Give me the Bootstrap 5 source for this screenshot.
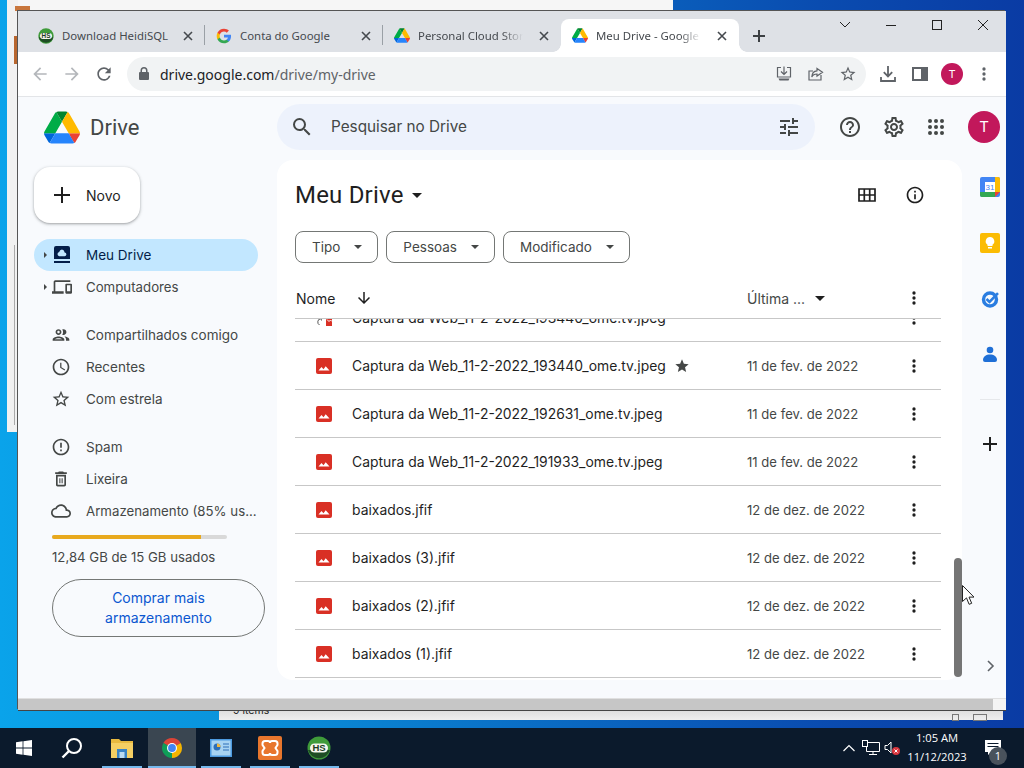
<!doctype html>
<html lang="pt-BR">

<head>
    <meta charset="UTF-8">
    <meta name="viewport" content="width=device-width, initial-scale=1.0">
    <title>Meu Drive - Google Drive</title>
    <link href="https://cdn.jsdelivr.net/npm/bootstrap@5.3.0/dist/css/bootstrap.min.css" rel="stylesheet">
    <style>
        html, body { width: 1024px; height: 768px; overflow: hidden; }
        body { font-family: "Inter", "Liberation Sans", sans-serif; font-size: 13.5px; color: #1f1f1f; background: #0b6cc8; }
        svg { fill: currentColor; flex: none; display: block; }

        /* desktop */
        .desk { position: relative; width: 1024px; height: 768px; overflow: hidden; background: linear-gradient(90deg, #0aa3ea 0, #0a94dc 22%, #0a6fc6 50%, #0a4cb0 80%, #0a3ba4 100%); }
        .back-top { position: absolute; left: 7px; top: 0; width: 666px; height: 11px; background: #f6f6f6; border-bottom: 1px solid #777; }
        .back-left { position: absolute; left: 7px; top: 0; width: 11px; height: 432px; background: #f1f1f1; }
        .back-line { position: absolute; left: 14px; top: 245px; width: 1px; height: 180px; background: #aaa; }
        .back-o1 { position: absolute; left: 15px; top: 6px; width: 15px; height: 5px; background: #c8763c; }
        .back-o2 { position: absolute; left: 14px; top: 36px; width: 4px; height: 28px; background: #b8662e; }
        .back-bot { position: absolute; left: 219px; top: 700px; width: 784px; height: 20px; background: linear-gradient(180deg, #ddd 50%, #eee); font-size: 10.5px; color: #222; padding: 3px 8px 0 14px; }
        .back-mark { width: 7px; height: 7px; margin: 11px 14px 0 0; border: 1px solid #777; }
        .back-mark.is-wide { width: 14px; margin-right: 8px; }

        /* chrome window */
        .browser { position: absolute; left: 18px; top: 11px; width: 988px; height: 699px; background: #fff; box-shadow: -1px -1px 0 #555, 0 1px 0 #444; }
        .tab-strip { height: 41px; background: #dee1e6; }
        .tab-row { padding: 8px 0 0 9px; }
        .chrome-tab { position: relative; width: 178px; height: 33px; padding: 0 9px 0 11px; font-family: "Noto Sans", sans-serif; font-size: 11.4px; color: #45494e; }
        .chrome-tab::after { content: ""; position: absolute; right: 0; top: 6px; width: 1px; height: 20px; background: #9aa0a6; }
        .chrome-tab.is-last::after { display: none; }
        .chrome-tab.is-on { background: #fff; border-radius: 8px 8px 0 0; }
        .chrome-tab.is-on::before, .chrome-tab.is-on::after { content: ""; position: absolute; bottom: 0; top: auto; width: 8px; height: 8px; }
        .chrome-tab.is-on::before { left: -8px; background: radial-gradient(circle at 0 0, transparent 7.5px, #fff 8px); }
        .chrome-tab.is-on::after { right: -8px; background: radial-gradient(circle at 100% 0, transparent 7.5px, #fff 8px); }
        .tab-title { flex: 1; min-width: 0; margin-left: 8px; white-space: nowrap; }
        .tab-fade { margin-right: 13px; -webkit-mask-image: linear-gradient(90deg, #000 80%, transparent); mask-image: linear-gradient(90deg, #000 80%, transparent); }
        .new-tab { width: 28px; height: 28px; margin-left: 6px; color: #3c4043; }
        .win-btn { width: 46px; height: 28px; color: #222; }

        .tool-bar { height: 45px; border-bottom: 1px solid #e3e5e8; padding: 0 6px; color: #5f6368; }
        .tool-btn { width: 32px; height: 32px; }
        .tool-off { color: #b4b7bb; }
        .omni { width: 739px; height: 34px; margin: 0 6px 0 7px; padding: 0 2px 0 11px; background: #f1f3f4; border-radius: 17px; font-family: "Noto Sans", sans-serif; font-size: 14px; }
        .omni-url { margin-left: 10px; color: #202124; }
        .omni-url span { color: #5f6368; }
        .face-sm { width: 22px; height: 22px; margin: 0 5px; border-radius: 50%; background: #c2185b; color: #fff; font-size: 11px; }

        /* drive */
        .drive-app { height: 601px; background: #f8fafd; }
        .drive-head { height: 63px; }
        .logo-box { width: 259px; padding-left: 26px; margin-bottom: 3px; }
        .logo-word { margin-left: 10px; font-family: "Roboto", sans-serif; font-size: 22px; color: #444746; }
        .search-box { width: 538px; height: 46px; margin-top: -3px; margin-right: 23px; padding: 0 14px 0 13px; background: #edf2fc; border-radius: 23px; color: #444746; font-size: 15.3px; }
        .search-box span { margin-left: 17px; padding-top: 1px; }
        .head-tools { gap: 20px; margin-top: -3px; color: #444746; }
        .apps-ic { margin-left: -2px; }
        .face-lg { width: 32px; height: 32px; border-radius: 50%; background: #c2185b; color: #fff; font-size: 15px; }

        .drive-body { height: 538px; }
        .side-col { width: 259px; padding-left: 16px; }
        .new-btn { width: 106px; height: 56px; margin: 7px 0 16px; padding-left: 16px; background: #fff; border: 0; border-radius: 16px; box-shadow: 0 1px 2px rgba(60,64,67,.3), 0 1px 3px 1px rgba(60,64,67,.15); font-size: 14px; color: #1f1f1f; }
        .new-btn span { margin-left: 12px; }
        .side-item { width: 224px; height: 32px; color: #444746; white-space: nowrap; }
        .side-item.is-on { background: #c2e7ff; border-radius: 16px; color: #041e49; }
        .side-caret { width: 10px; padding-left: 10px; margin-right: 8px; }
        .side-caret::before { content: ""; display: block; width: 0; height: 0; border-left: 3px solid #444746; border-top: 3px solid transparent; border-bottom: 3px solid transparent; }
        .side-ic { margin-left: 17px; }
        .drive-ic { margin-left: 1px; }
        .side-lbl { margin-left: 15px; }
        .side-lbl-comp { margin-left: 14px; }
        .side-lbl-small { padding-top: 1px; font-size: 13.25px; }
        .side-gap { margin-top: 16px; }
        .store-box { padding-left: 18px; }
        .store-bar { width: 175px; height: 4px; margin-top: 8px; background: #d9d9d9; border-radius: 2px; }
        .store-bar .progress-bar { background: #e8a91e; }
        .store-txt { margin-top: 8px; height: 20px; line-height: 20px; color: #444746; font-size: 13.2px; }
        .buy-btn { width: 213px; height: 58px; margin-top: 12px; padding: 0 30px; border: 1px solid #747775; border-radius: 29px; background: transparent; font-size: 14px; line-height: 20px; color: #0b57d0; }

        .main-card { position: relative; width: 685px; height: 520px; padding: 15px 21px 0 18px; background: #fff; border-radius: 16px; }
        .page-title { height: 40px; }
        .title-txt { font-family: "Roboto", sans-serif; font-size: 24px; letter-spacing: .2px; color: #1f1f1f; }
        .caret-ic { width: 0; height: 0; border-left: 5px solid transparent; border-right: 5px solid transparent; border-top: 5px solid currentColor; }
        .title-tools { gap: 26px; margin-right: 16px; }
        .filter-row { margin-top: 16px; gap: 8px; }
        .filter-btn { height: 32px; padding: 0 13px 0 16px; gap: 12px; border: 1px solid #747775; border-radius: 8px; background: #fff; color: #444746; font-size: 13.5px; }
        .filter-btn .caret-ic { border-width: 4px 4px 0; margin: 0 2px; border-top-color: #444746; border-left-color: transparent; border-right-color: transparent; }
        .list-head { height: 39px; margin-top: 17px; padding-bottom: 2px; border-bottom: 1px solid #c7c7c7; color: #1f1f1f; font-size: 14px; }
        .name-cell { width: 452px; padding-left: 1px; }
        .name-cell svg { margin-left: 20px; }
        .date-cell { width: 152px; padding-top: 2px; color: #444746; white-space: nowrap; font-size: 13.1px; }
        .head-date { padding-top: 0; font-size: 14px; }
        .head-date .caret-ic { margin-left: 10px; color: #1f1f1f; }
        .more-cell { width: 30px; color: #1f1f1f; }
        .file-list { height: 359px; overflow: hidden; }
        .file-row { height: 48px; border-bottom: 1px solid #c7c7c7; }
        .file-row.is-cut { margin-top: -25px; }
        .file-ic { width: 57px; padding-left: 21px; }
        .file-name { width: 395px; padding-top: 2px; white-space: nowrap; color: #1f1f1f; font-size: 13.9px; }
        .file-star { margin-left: 8px; color: #444746; }

        .main-scroll { position: absolute; left: 677px; top: 398px; width: 8px; height: 119px; background: #757575; border-radius: 4px; }
        .cursor-ic { position: absolute; left: 962px; top: 585px; }

        .addon-col { width: 44px; padding-left: 18px; gap: 36px; padding-top: 17px; position: relative; }
        .addon-line { width: 20px; height: 1px; background: #e6e8eb; margin: -2px 0; }
        .addon-end { position: absolute; left: 20px; top: 498px; color: #5f6368; }

        .bottom-bar { height: 12px; border-top: 1px solid #e0e0e0; }
        .bottom-fill { flex: 1; background: #c6c6c6; }
        .bottom-end { width: 13px; background: #f4f4f4; }

        /* taskbar */
        .task-bar { position: absolute; left: 0; right: 0; bottom: 0; height: 40px; background: #0b1a2c; color: #fff; font-family: "Open Sans", sans-serif; font-size: 11.2px; }
        .task-item { position: relative; width: 48px; height: 40px; }
        .task-item.is-open::after { content: ""; position: absolute; left: 4px; right: 4px; bottom: 0; height: 2px; background: #76b9ed; }
        .task-item.is-on { background: #3a4651; }
        .task-item.is-on::after { left: 0; right: 0; }
        .task-m2 { margin-left: 2px; }
        .task-m1 { margin-left: 1px; }
        .tray-ic { width: 22px; }
        .clock-box { width: 72px; margin: -2px 0 0 -3px; line-height: 19px; }
        .note-box { position: relative; width: 48px; margin-right: 3px; }
        .note-num { position: absolute; left: 16px; top: 8px; width: 18px; height: 18px; border-radius: 50%; background: #49525c; font-size: 11px; line-height: 18px; text-align: center; }
    </style>
</head>

<body>
    <svg class="d-none">
        <symbol id="gdrive" viewBox="0 0 87.3 78">
            <path d="m6.6 66.85 3.85 6.65c.8 1.4 1.95 2.5 3.3 3.3l13.75-23.8h-27.5c0 1.55.4 3.1 1.2 4.5z" fill="#0066da"/>
            <path d="m43.65 25-13.75-23.8c-1.35.8-2.5 1.9-3.3 3.3l-25.4 44a9.06 9.06 0 0 0 -1.2 4.5h27.5z" fill="#00ac47"/>
            <path d="m73.55 76.8c1.35-.8 2.5-1.9 3.3-3.3l1.6-2.75 7.65-13.25c.8-1.4 1.2-2.95 1.2-4.5h-27.502l5.852 11.5z" fill="#ea4335"/>
            <path d="m43.65 25 13.75-23.8c-1.35-.8-2.9-1.2-4.5-1.2h-18.5c-1.6 0-3.15.45-4.5 1.2z" fill="#00832d"/>
            <path d="m59.8 53h-32.3l-13.75 23.8c1.35.8 2.9 1.2 4.5 1.2h50.8c1.6 0 3.15-.45 4.5-1.2z" fill="#2684fc"/>
            <path d="m73.4 26.5-12.7-22c-.8-1.4-1.95-2.5-3.3-3.3l-13.75 23.8 16.15 28h27.45c0-1.55-.4-3.1-1.2-4.5z" fill="#ffba00"/>
        </symbol>
        <symbol id="hs" viewBox="0 0 24 24">
            <circle cx="12" cy="12" r="11.5" fill="#3f9b3a"/>
            <path d="M1 14a11.500 11.500 0 0 0 22 0z" fill="#1e4d24"/>
            <rect x="3" y="7.500" width="18" height="9" rx="4.500" fill="#f4f6ee"/>
            <text x="12" y="15.300" text-anchor="middle" font-family="Liberation Sans, sans-serif" font-size="9.500" font-weight="700" fill="#1d3d1f">HS</text>
        </symbol>
        <symbol id="g-logo" viewBox="0 0 24 24">
            <path fill="#4285F4" d="M22.56 12.25c0-.78-.07-1.53-.2-2.25H12v4.26h5.92c-.26 1.37-1.04 2.53-2.21 3.31v2.77h3.57c2.08-1.92 3.28-4.74 3.28-8.09z"/>
            <path fill="#34A853" d="M12 23c2.97 0 5.46-.98 7.28-2.66l-3.57-2.77c-.98.66-2.23 1.06-3.71 1.06-2.86 0-5.29-1.93-6.16-4.53H2.18v2.84C3.99 20.53 7.7 23 12 23z"/>
            <path fill="#FBBC05" d="M5.84 14.09c-.22-.66-.35-1.36-.35-2.09s.13-1.43.35-2.09V7.07H2.18C1.43 8.55 1 10.22 1 12s.43 3.45 1.18 4.93l3.66-2.84z"/>
            <path fill="#EA4335" d="M12 5.38c1.62 0 3.06.56 4.21 1.64l3.15-3.15C17.45 2.09 14.97 1 12 1 7.7 1 3.99 3.47 2.18 7.07l3.66 2.84c.87-2.6 3.3-4.53 6.16-4.53z"/>
        </symbol>
        <symbol id="close-x" viewBox="0 0 16 16"><path d="M4 4l8 8M12 4l-8 8" stroke="currentColor" stroke-width="1.6" fill="none"/></symbol>
        <symbol id="image-red" viewBox="0 0 16 16">
            <rect width="16" height="16" rx="2" fill="#d93025"/>
            <path d="M2.5 12.5l3-3.5 2 2.2 2.2-3 3.8 4.3z" fill="#fff"/>
        </symbol>
        <symbol id="more" viewBox="0 0 24 24"><circle cx="12" cy="6" r="2"/><circle cx="12" cy="12" r="2"/><circle cx="12" cy="18" r="2"/></symbol>
        <symbol id="star-line" viewBox="0 0 24 24"><path d="M22 9.24l-7.19-.62L12 2 9.19 8.63 2 9.24l5.46 4.73L5.82 21 12 17.27 18.18 21l-1.63-7.03L22 9.24zM12 15.4l-3.76 2.27 1-4.28-3.32-2.88 4.38-.38L12 6.1l1.71 4.04 4.38.38-3.32 2.88 1 4.28L12 15.4z"/></symbol>
    </svg>

    <div class="desk">
        <div class="back-top"></div>
        <div class="back-left"></div>
        <div class="back-line"></div>
        <div class="back-o1"></div>
        <div class="back-o2"></div>
        <div class="back-bot d-flex justify-content-between">
            <span>9 items</span>
            <span class="d-flex"><span class="back-mark"></span><span class="back-mark is-wide"></span></span>
        </div>

        <div class="browser d-flex flex-column">
            <!-- tabs -->
            <div class="tab-strip d-flex justify-content-between">
                <div class="tab-row d-flex align-items-center">
                    <div class="chrome-tab d-flex align-items-center">
                        <svg width="16" height="16"><use href="#hs"/></svg>
                        <div class="tab-title">Download HeidiSQL</div>
                        <svg width="16" height="16"><use href="#close-x"/></svg>
                    </div>
                    <div class="chrome-tab d-flex align-items-center">
                        <svg width="16" height="16"><use href="#g-logo"/></svg>
                        <div class="tab-title">Conta do Google</div>
                        <svg width="16" height="16"><use href="#close-x"/></svg>
                    </div>
                    <div class="chrome-tab is-last d-flex align-items-center">
                        <svg width="16" height="15"><use href="#gdrive"/></svg>
                        <div class="tab-title tab-fade">Personal Cloud Stora</div>
                        <svg width="16" height="16"><use href="#close-x"/></svg>
                    </div>
                    <div class="chrome-tab is-on d-flex align-items-center">
                        <svg width="16" height="15"><use href="#gdrive"/></svg>
                        <div class="tab-title tab-fade">Meu Drive - Google</div>
                        <svg width="16" height="16"><use href="#close-x"/></svg>
                    </div>
                    <div class="new-tab d-flex align-items-center justify-content-center">
                        <svg width="14" height="14" viewBox="0 0 14 14"><path d="M7 1v12M1 7h12" stroke="currentColor" stroke-width="2" fill="none"/></svg>
                    </div>
                </div>
                <div class="d-flex align-items-start">
                    <div class="win-btn d-flex align-items-center justify-content-center">
                        <svg width="12" height="8" viewBox="0 0 12 8"><path d="M1 1l5 5 5-5" stroke="currentColor" fill="none"/></svg>
                    </div>
                    <div class="win-btn d-flex align-items-center justify-content-center">
                        <svg width="10" height="10" viewBox="0 0 10 10"><path d="M0 5.5h10" stroke="currentColor" fill="none"/></svg>
                    </div>
                    <div class="win-btn d-flex align-items-center justify-content-center">
                        <svg width="10" height="10" viewBox="0 0 10 10"><rect x=".5" y=".5" width="9" height="9" stroke="currentColor" fill="none"/></svg>
                    </div>
                    <div class="win-btn d-flex align-items-center justify-content-center">
                        <svg width="10" height="10" viewBox="0 0 10 10"><path d="M0 0l10 10M10 0L0 10" stroke="currentColor" fill="none"/></svg>
                    </div>
                </div>
            </div>

            <!-- toolbar -->
            <div class="tool-bar d-flex align-items-center">
                <div class="tool-btn tool-off d-flex align-items-center justify-content-center">
                    <svg width="20" height="20" viewBox="0 0 24 24"><path d="M20 11H7.83l5.59-5.59L12 4l-8 8 8 8 1.41-1.41L7.83 13H20v-2z"/></svg>
                </div>
                <div class="tool-btn tool-off d-flex align-items-center justify-content-center">
                    <svg width="20" height="20" viewBox="0 0 24 24"><path d="M12 4l-1.41 1.41L16.17 11H4v2h12.17l-5.58 5.59L12 20l8-8z"/></svg>
                </div>
                <div class="tool-btn d-flex align-items-center justify-content-center">
                    <svg width="20" height="20" viewBox="0 0 24 24"><path d="M17.65 6.35A7.958 7.958 0 0 0 12 4c-4.42 0-7.99 3.58-7.99 8s3.57 8 7.99 8c3.73 0 6.84-2.55 7.73-6h-2.08A5.99 5.99 0 0 1 12 18c-3.31 0-6-2.69-6-6s2.69-6 6-6c1.66 0 3.14.69 4.22 1.78L13 11h7V4l-2.35 2.35z"/></svg>
                </div>
                <div class="omni d-flex align-items-center">
                    <svg width="12" height="14" viewBox="0 0 12 14"><path d="M10 5H9.5V3.5a3.5 3.5 0 0 0-7 0V5H2a1 1 0 0 0-1 1v6a1 1 0 0 0 1 1h8a1 1 0 0 0 1-1V6a1 1 0 0 0-1-1zM4 3.5a2 2 0 0 1 4 0V5H4V3.5z"/></svg>
                    <div class="omni-url flex-grow-1">drive.google.com<span>/drive/my-drive</span></div>
                    <div class="tool-btn d-flex align-items-center justify-content-center">
                        <svg width="18" height="18" viewBox="0 0 18 18"><path d="M6 2.500H2.500V12h13V2.500H12M9 1.500V9M6 6.500L9 9.500l3-3" stroke="currentColor" stroke-width="1.2" fill="none"/><path d="M3.500 13.500h11l-1 2h-9z"/></svg>
                    </div>
                    <div class="tool-btn d-flex align-items-center justify-content-center">
                        <svg width="18" height="18" viewBox="0 0 18 18"><path d="M14 10v5H2V6h4M10 3.5l5.5 3.8-5.5 3.7V9C7.5 9 5.7 10 4.8 12 5 8.5 7 6 10 5.8z" stroke="currentColor" stroke-width="1.2" fill="none"/></svg>
                    </div>
                    <div class="tool-btn d-flex align-items-center justify-content-center">
                        <svg width="18" height="18" viewBox="0 0 24 24"><use href="#star-line"/></svg>
                    </div>
                </div>
                <div class="tool-btn d-flex align-items-center justify-content-center">
                    <svg width="20" height="20" viewBox="0 0 20 20"><path d="M10 2v10M5.8 8.2L10 12.4l4.2-4.2M3 13v4h14v-4" stroke="currentColor" stroke-width="1.8" fill="none"/></svg>
                </div>
                <div class="tool-btn d-flex align-items-center justify-content-center">
                    <svg width="16" height="14" viewBox="0 0 16 14"><path d="M0 0h16v14H0zM2 2v10h7V2z" fill-rule="evenodd"/></svg>
                </div>
                <div class="face-sm d-flex align-items-center justify-content-center">T</div>
                <div class="tool-btn d-flex align-items-center justify-content-center">
                    <svg width="20" height="20" viewBox="0 0 24 24"><use href="#more"/></svg>
                </div>
            </div>

            <!-- drive page -->
            <div class="drive-app">
                <div class="drive-head d-flex align-items-center">
                    <div class="logo-box d-flex align-items-center">
                        <svg width="36" height="33"><use href="#gdrive"/></svg>
                        <span class="logo-word">Drive</span>
                    </div>
                    <div class="search-box d-flex align-items-center">
                        <svg width="24" height="24" viewBox="0 0 24 24"><path d="M15.5 14h-.79l-.28-.27A6.471 6.471 0 0 0 16 9.5 6.5 6.5 0 1 0 9.5 16c1.61 0 3.09-.59 4.23-1.57l.27.28v.79l5 4.99L20.49 19l-4.99-5zm-6 0C7.01 14 5 11.99 5 9.5S7.01 5 9.5 5 14 7.01 14 9.5 11.99 14 9.5 14z"/></svg>
                        <span class="flex-grow-1">Pesquisar no Drive</span>
                        <svg width="24" height="24" viewBox="0 0 24 24"><path d="M3 17v2h6v-2H3zM3 5v2h10V5H3zm10 16v-2h8v-2h-8v-2h-2v6h2zM7 9v2H3v2h4v2h2V9H7zm14 4v-2H11v2h10zm-6-4h2V7h4V5h-4V3h-2v6z"/></svg>
                    </div>
                    <div class="head-tools d-flex align-items-center">
                        <svg width="24" height="24" viewBox="0 0 24 24"><path d="M11 18h2v-2h-2v2zm1-16C6.48 2 2 6.48 2 12s4.48 10 10 10 10-4.48 10-10S17.52 2 12 2zm0 18c-4.41 0-8-3.59-8-8s3.59-8 8-8 8 3.59 8 8-3.59 8-8 8zm0-14c-2.21 0-4 1.79-4 4h2c0-1.1.9-2 2-2s2 .9 2 2c0 2-3 1.75-3 5h2c0-2.25 3-2.5 3-5 0-2.21-1.79-4-4-4z"/></svg>
                        <svg width="24" height="24" viewBox="0 0 24 24"><path d="M19.43 12.98c.04-.32.07-.64.07-.98 0-.34-.03-.66-.07-.98l2.11-1.65c.19-.15.24-.42.12-.64l-2-3.46c-.09-.16-.26-.25-.44-.25-.06 0-.12.01-.17.03l-2.49 1c-.52-.4-1.08-.73-1.69-.98l-.38-2.65C14.46 2.18 14.25 2 14 2h-4c-.25 0-.46.18-.49.42l-.38 2.65c-.61.25-1.17.59-1.69.98l-2.49-1c-.06-.02-.12-.03-.18-.03-.17 0-.34.09-.43.25l-2 3.46c-.13.22-.07.49.12.64l2.11 1.65c-.04.32-.07.65-.07.98 0 .33.03.66.07.98l-2.11 1.65c-.19.15-.24.42-.12.64l2 3.46c.09.16.26.25.44.25.06 0 .12-.01.17-.03l2.49-1c.52.4 1.08.73 1.69.98l.38 2.65c.03.24.24.42.49.42h4c.25 0 .46-.18.49-.42l.38-2.65c.61-.25 1.17-.59 1.69-.98l2.49 1c.06.02.12.03.18.03.17 0 .34-.09.43-.25l2-3.46c.12-.22.07-.49-.12-.64l-2.11-1.65zm-1.98-1.71c.04.31.05.52.05.73 0 .21-.02.43-.05.73l-.14 1.13.89.7 1.08.84-.7 1.21-1.27-.51-1.04-.42-.9.68c-.43.32-.84.56-1.25.73l-1.06.43-.16 1.13-.2 1.35h-1.4l-.19-1.35-.16-1.13-1.06-.43c-.43-.18-.83-.41-1.23-.71l-.91-.7-1.06.43-1.27.51-.7-1.21 1.08-.84.89-.7-.14-1.13c-.03-.31-.05-.54-.05-.74s.02-.43.05-.73l.14-1.13-.89-.7-1.08-.84.7-1.21 1.27.51 1.04.42.9-.68c.43-.32.84-.56 1.25-.73l1.06-.43.16-1.13.2-1.35h1.39l.19 1.35.16 1.13 1.06.43c.43.18.83.41 1.23.71l.91.7 1.06-.43 1.27-.51.7 1.21-1.07.85-.89.7.14 1.13zM12 8c-2.21 0-4 1.79-4 4s1.79 4 4 4 4-1.79 4-4-1.79-4-4-4zm0 6c-1.1 0-2-.9-2-2s.9-2 2-2 2 .9 2 2-.9 2-2 2z"/></svg>
                        <svg class="apps-ic" width="24" height="24" viewBox="0 0 24 24"><circle cx="6" cy="6" r="2"/><circle cx="12" cy="6" r="2"/><circle cx="18" cy="6" r="2"/><circle cx="6" cy="12" r="2"/><circle cx="12" cy="12" r="2"/><circle cx="18" cy="12" r="2"/><circle cx="6" cy="18" r="2"/><circle cx="12" cy="18" r="2"/><circle cx="18" cy="18" r="2"/></svg>
                        <div class="face-lg d-flex align-items-center justify-content-center">T</div>
                    </div>
                </div>

                <div class="drive-body d-flex">
                    <!-- left nav -->
                    <div class="side-col">
                        <button class="new-btn d-flex align-items-center" type="button">
                            <svg width="24" height="24" viewBox="0 0 24 24"><path d="M20 13h-7v7h-2v-7H4v-2h7V4h2v7h7z"/></svg>
                            <span>Novo</span>
                        </button>
                        <div class="side-item is-on d-flex align-items-center">
                            <span class="side-caret"></span>
                            <svg class="drive-ic" width="18" height="18" viewBox="0 0 18 18"><path d="M3 0h12a2 2 0 0 1 2 2v11H1V2a2 2 0 0 1 2-2zM1 15h16v2H1z"/><path d="M9 3.500a3 3 0 0 1 2.600 2.900 1.900 1.900 0 0 1-.3 3.800H6.300a2.200 2.200 0 0 1-.1-4.300A3.100 3.100 0 0 1 9 3.500z" fill="#c2e7ff"/></svg>
                            <span class="side-lbl">Meu Drive</span>
                        </div>
                        <div class="side-item d-flex align-items-center">
                            <span class="side-caret"></span>
                            <svg width="20" height="20" viewBox="0 0 24 24"><path d="M4 6h18V4H4c-1.1 0-2 .9-2 2v11H0v3h14v-3H4V6zm19 2h-6c-.55 0-1 .45-1 1v10c0 .55.45 1 1 1h6c.55 0 1-.45 1-1V9c0-.55-.45-1-1-1zm-1 9h-4v-7h4v7z"/></svg>
                            <span class="side-lbl-comp side-lbl-small">Computadores</span>
                        </div>

                        <div class="side-item side-gap d-flex align-items-center">
                            <svg class="side-ic" width="20" height="20" viewBox="0 0 24 24"><path d="M9 13.750c-2.340 0-7 1.170-7 3.500V19h14v-1.750c0-2.330-4.660-3.500-7-3.500zM4.340 17c.84-.58 2.870-1.250 4.660-1.250s3.820.67 4.660 1.250H4.340zM9 12c1.930 0 3.500-1.570 3.500-3.500S10.930 5 9 5 5.500 6.570 5.500 8.500 7.070 12 9 12zm0-5c.83 0 1.500.67 1.500 1.500S9.830 10 9 10s-1.500-.67-1.500-1.500S8.170 7 9 7zm7.040 6.810c1.160.84 1.960 1.960 1.960 3.440V19h4v-1.750c0-2.020-3.500-3.170-5.960-3.440zM15 12c1.930 0 3.500-1.570 3.500-3.500S16.930 5 15 5c-.54 0-1.040.13-1.500.35.63.89 1 1.980 1 3.150s-.37 2.260-1 3.150c.46.22.96.35 1.500.35z"/></svg>
                            <span class="side-lbl">Compartilhados comigo</span>
                        </div>
                        <div class="side-item d-flex align-items-center">
                            <svg class="side-ic" width="20" height="20" viewBox="0 0 24 24"><path d="M11.99 2C6.47 2 2 6.48 2 12s4.47 10 9.99 10C17.52 22 22 17.52 22 12S17.52 2 11.99 2zM12 20c-4.42 0-8-3.58-8-8s3.58-8 8-8 8 3.58 8 8-3.58 8-8 8zm.5-13H11v6l5.25 3.15.75-1.23-4.5-2.67z"/></svg>
                            <span class="side-lbl">Recentes</span>
                        </div>
                        <div class="side-item d-flex align-items-center">
                            <svg class="side-ic" width="20" height="20" viewBox="0 0 24 24"><use href="#star-line"/></svg>
                            <span class="side-lbl">Com estrela</span>
                        </div>

                        <div class="side-item side-gap d-flex align-items-center">
                            <svg class="side-ic" width="20" height="20" viewBox="0 0 24 24"><path d="M11 15h2v2h-2zm0-8h2v6h-2zm.99-5C6.47 2 2 6.48 2 12s4.47 10 9.99 10C17.52 22 22 17.52 22 12S17.52 2 11.99 2zM12 20c-4.42 0-8-3.58-8-8s3.58-8 8-8 8 3.58 8 8-3.58 8-8 8z"/></svg>
                            <span class="side-lbl">Spam</span>
                        </div>
                        <div class="side-item d-flex align-items-center">
                            <svg class="side-ic" width="20" height="20" viewBox="0 0 24 24"><path d="M6 19c0 1.100.9 2 2 2h8c1.100 0 2-.9 2-2V7H6v12zM8 9h8v10H8V9zm7.500-5l-1-1h-5l-1 1H5v2h14V4z"/><path d="M10 11h1.300v6H10zM12.700 11H14v6h-1.300z"/></svg>
                            <span class="side-lbl">Lixeira</span>
                        </div>
                        <div class="side-item d-flex align-items-center">
                            <svg class="side-ic" width="20" height="20" viewBox="0 0 24 24"><path d="M19.35 10.04C18.67 6.59 15.64 4 12 4 9.11 4 6.6 5.64 5.35 8.04 2.34 8.36 0 10.91 0 14c0 3.31 2.69 6 6 6h13c2.76 0 5-2.24 5-5 0-2.64-2.05-4.78-4.65-4.96zM19 18H6c-2.21 0-4-1.79-4-4s1.79-4 4-4h.71C7.37 7.69 9.48 6 12 6c3.04 0 5.5 2.46 5.5 5.5v.5H19c1.66 0 3 1.34 3 3s-1.34 3-3 3z"/></svg>
                            <span class="side-lbl side-lbl-small">Armazenamento (85% us...</span>
                        </div>
                        <div class="store-box">
                            <div class="progress store-bar">
                                <div class="progress-bar" style="width: 85%"></div>
                            </div>
                            <div class="store-txt">12,84 GB de 15 GB usados</div>
                            <button class="buy-btn" type="button">Comprar mais armazenamento</button>
                        </div>
                    </div>

                    <!-- file list -->
                    <div class="main-card">
                        <div class="page-title d-flex align-items-center justify-content-between">
                            <div class="d-flex align-items-center gap-2">
                                <span class="title-txt">Meu Drive</span>
                                <span class="caret-ic"></span>
                            </div>
                            <div class="title-tools d-flex align-items-center">
                                <svg width="24" height="24" viewBox="0 0 24 24"><path d="M4 6h16v12H4zM4 12h16M9.300 6v12M14.700 6v12" stroke="currentColor" stroke-width="1.700" fill="none"/></svg>
                                <svg width="20" height="20" viewBox="0 0 24 24"><path d="M11 7h2v2h-2zm0 4h2v6h-2zm1-9C6.48 2 2 6.48 2 12s4.48 10 10 10 10-4.48 10-10S17.52 2 12 2zm0 18c-4.41 0-8-3.59-8-8s3.59-8 8-8 8 3.59 8 8-3.59 8-8 8z"/></svg>
                            </div>
                        </div>
                        <div class="filter-row d-flex">
                            <button class="filter-btn d-flex align-items-center" type="button">Tipo<span class="caret-ic"></span></button>
                            <button class="filter-btn d-flex align-items-center" type="button">Pessoas<span class="caret-ic"></span></button>
                            <button class="filter-btn d-flex align-items-center" type="button">Modificado<span class="caret-ic"></span></button>
                        </div>
                        <div class="list-head d-flex align-items-center">
                            <div class="name-cell d-flex align-items-center">
                                <span>Nome</span>
                                <svg width="18" height="18" viewBox="0 0 24 24"><path d="M20 12l-1.41-1.41L13 16.17V4h-2v12.17l-5.58-5.59L4 12l8 8 8-8z"/></svg>
                            </div>
                            <div class="date-cell head-date d-flex align-items-center"><span>Última ...</span><span class="caret-ic"></span></div>
                            <div class="more-cell d-flex justify-content-center"><svg width="20" height="20" viewBox="0 0 24 24"><use href="#more"/></svg></div>
                        </div>
                        <div class="file-list">
                            <div class="file-row is-cut d-flex align-items-center">
                                <div class="file-ic"><svg width="16" height="16" viewBox="0 0 16 16"><path d="M10 9h6v7h-6z" fill="#d93025"/><path d="M11 9.500l2 2 1.500-1.500 1.500 1.500" stroke="#fff" fill="none"/><path d="M5 8.500a3.500 3.500 0 0 0-1.500 6.500M3 9l2-.5.500 2" stroke="#555" fill="none"/></svg></div>
                                <div class="file-name d-flex align-items-center">Captura da Web_11-2-2022_193440_ome.tv.jpeg</div>
                                <div class="date-cell"></div>
                                <div class="more-cell d-flex justify-content-center"><svg width="20" height="20" viewBox="0 0 24 24"><use href="#more"/></svg></div>
                            </div>
                            <div class="file-row d-flex align-items-center">
                                <div class="file-ic"><svg width="16" height="16"><use href="#image-red"/></svg></div>
                                <div class="file-name d-flex align-items-center">Captura da Web_11-2-2022_193440_ome.tv.jpeg
                                    <svg class="file-star" width="16" height="16" viewBox="0 0 24 24"><path d="M12 17.27L18.18 21l-1.64-7.03L22 9.24l-7.19-.61L12 2 9.19 8.63 2 9.24l5.46 4.73L5.82 21z"/></svg>
                                </div>
                                <div class="date-cell">11 de fev. de 2022</div>
                                <div class="more-cell d-flex justify-content-center"><svg width="20" height="20" viewBox="0 0 24 24"><use href="#more"/></svg></div>
                            </div>
                            <div class="file-row d-flex align-items-center">
                                <div class="file-ic"><svg width="16" height="16"><use href="#image-red"/></svg></div>
                                <div class="file-name">Captura da Web_11-2-2022_192631_ome.tv.jpeg</div>
                                <div class="date-cell">11 de fev. de 2022</div>
                                <div class="more-cell d-flex justify-content-center"><svg width="20" height="20" viewBox="0 0 24 24"><use href="#more"/></svg></div>
                            </div>
                            <div class="file-row d-flex align-items-center">
                                <div class="file-ic"><svg width="16" height="16"><use href="#image-red"/></svg></div>
                                <div class="file-name">Captura da Web_11-2-2022_191933_ome.tv.jpeg</div>
                                <div class="date-cell">11 de fev. de 2022</div>
                                <div class="more-cell d-flex justify-content-center"><svg width="20" height="20" viewBox="0 0 24 24"><use href="#more"/></svg></div>
                            </div>
                            <div class="file-row d-flex align-items-center">
                                <div class="file-ic"><svg width="16" height="16"><use href="#image-red"/></svg></div>
                                <div class="file-name">baixados.jfif</div>
                                <div class="date-cell">12 de dez. de 2022</div>
                                <div class="more-cell d-flex justify-content-center"><svg width="20" height="20" viewBox="0 0 24 24"><use href="#more"/></svg></div>
                            </div>
                            <div class="file-row d-flex align-items-center">
                                <div class="file-ic"><svg width="16" height="16"><use href="#image-red"/></svg></div>
                                <div class="file-name">baixados (3).jfif</div>
                                <div class="date-cell">12 de dez. de 2022</div>
                                <div class="more-cell d-flex justify-content-center"><svg width="20" height="20" viewBox="0 0 24 24"><use href="#more"/></svg></div>
                            </div>
                            <div class="file-row d-flex align-items-center">
                                <div class="file-ic"><svg width="16" height="16"><use href="#image-red"/></svg></div>
                                <div class="file-name">baixados (2).jfif</div>
                                <div class="date-cell">12 de dez. de 2022</div>
                                <div class="more-cell d-flex justify-content-center"><svg width="20" height="20" viewBox="0 0 24 24"><use href="#more"/></svg></div>
                            </div>
                            <div class="file-row d-flex align-items-center">
                                <div class="file-ic"><svg width="16" height="16"><use href="#image-red"/></svg></div>
                                <div class="file-name">baixados (1).jfif</div>
                                <div class="date-cell">12 de dez. de 2022</div>
                                <div class="more-cell d-flex justify-content-center"><svg width="20" height="20" viewBox="0 0 24 24"><use href="#more"/></svg></div>
                            </div>
                        </div>
                        <div class="main-scroll"></div>
                    </div>

                    <!-- add-ons -->
                    <div class="addon-col d-flex flex-column">
                        <svg width="20" height="20" viewBox="0 0 20 20"><rect width="20" height="20" rx="2" fill="#4285f4"/><path d="M15 0h3a2 2 0 0 1 2 2v13h-5z" fill="#fbbc04"/><path d="M0 15h15v5H2a2 2 0 0 1-2-2z" fill="#34a853"/><path d="M15 15h5l-5 5z" fill="#ea4335"/><rect x="5" y="5" width="10" height="10" fill="#fff"/><text x="10" y="13" text-anchor="middle" font-family="Liberation Sans, sans-serif" font-size="8" fill="#4285f4">31</text></svg>
                        <svg width="20" height="20" viewBox="0 0 20 20"><rect width="20" height="20" rx="2" fill="#fbbc04"/><path d="M10 4a4.300 4.300 0 0 0-2.500 7.800V13h5v-1.200A4.300 4.300 0 0 0 10 4zM8 14h4v1.500H8z" fill="#fff"/></svg>
                        <svg width="20" height="20" viewBox="0 0 20 20"><circle cx="10" cy="10.500" r="6.500" stroke="#2a7de1" stroke-width="3.400" fill="none"/><path d="M6.500 10l3 3L18 4.200" stroke="#2a7de1" stroke-width="2.600" fill="none"/></svg>
                        <svg width="20" height="20" viewBox="0 0 20 20"><circle cx="10" cy="5" r="3.300" fill="#1f6fd6"/><path d="M3 15c0-3.500 3.200-5.500 7-5.500s7 2 7 5.500a2 2 0 0 1-2 2H5a2 2 0 0 1-2-2z" fill="#1f6fd6"/></svg>
                        <div class="addon-line"></div>
                        <svg width="20" height="20" viewBox="0 0 20 20"><path d="M10 3v14M3 10h14" stroke="currentColor" stroke-width="2" fill="none"/></svg>
                        <svg class="addon-end" width="16" height="16" viewBox="0 0 16 16"><path d="M6 3l5 5-5 5" stroke="currentColor" stroke-width="1.6" fill="none"/></svg>
                    </div>
                </div>
            </div>

            <div class="bottom-bar d-flex">
                <div class="bottom-fill"></div>
                <div class="bottom-end"></div>
            </div>
        </div>

        <svg class="cursor-ic" width="12" height="21" viewBox="0 0 12 21"><path d="M.5.5v16l4-3.6 2.6 6.4 2.6-1-2.7-6.2h5z" fill="#fff" stroke="#222"/></svg>

        <!-- windows taskbar -->
        <div class="task-bar d-flex align-items-center">
            <div class="task-item d-flex align-items-center justify-content-center">
                <svg width="16" height="16" viewBox="0 0 16 16"><path d="M0 2.2l6.6-.9v6.3H0zM7.4 1.200L16 0v7.600H7.400zM0 8.400h6.600v6.300L0 13.800zM7.400 8.400H16V16l-8.600-1.200z"/></svg>
            </div>
            <div class="task-item d-flex align-items-center justify-content-center">
                <svg width="24" height="24" viewBox="0 0 24 24"><circle cx="14" cy="10" r="7" stroke="#fff" stroke-width="2" fill="none"/><path d="M9 15l-6.500 6.500" stroke="#fff" stroke-width="2.400" fill="none"/></svg>
            </div>
            <div class="task-item task-m2 is-open d-flex align-items-center justify-content-center">
                <svg width="24" height="22" viewBox="0 0 24 22"><path d="M1 2h8l2 2h12v4H1z" fill="#e8b93f"/><path d="M1 6h22v15H1z" fill="#f5cf63"/><path d="M7 12h10v9H7z" fill="#3a83c4"/><path d="M9.500 15h5v6h-5z" fill="#bcdcf2"/></svg>
            </div>
            <div class="task-item task-m2 is-on is-open d-flex align-items-center justify-content-center">
                <svg width="24" height="24" viewBox="0 0 48 48"><path d="M24 24L6.700 14A20 20 0 0 1 41.300 14z" fill="#db4437"/><path d="M24 24L41.300 14A20 20 0 0 1 24 44z" fill="#f4b400"/><path d="M24 24L24 44A20 20 0 0 1 6.700 14z" fill="#0f9d58"/><circle cx="24" cy="24" r="10" fill="#fff"/><circle cx="24" cy="24" r="7.800" fill="#4285f4"/></svg>
            </div>
            <div class="task-item task-m1 is-open d-flex align-items-center justify-content-center">
                <svg width="22" height="18" viewBox="0 0 22 18"><rect width="22" height="18" fill="#4d9be0"/><rect x="1.500" y="1.500" width="19" height="15" fill="#a8d4f3"/><circle cx="7" cy="8" r="3.500" fill="#2e6fb8"/><path d="M7 4.500V8h3.500A3.500 3.500 0 0 0 7 4.500z" fill="#f1b63c"/><path d="M13 5h6M13 8h6M13 11h6" stroke="#2e6fb8"/></svg>
            </div>
            <div class="task-item task-m1 is-open d-flex align-items-center justify-content-center">
                <svg width="24" height="24" viewBox="0 0 24 24"><rect width="24" height="24" rx="2" fill="#e8762d"/><path d="M7 5h3c1 0 2 1 2 2 0-1 1-2 2-2h3c1.500 0 2.500 1 2.500 2.500v1.500l-2 3 2 3v1.500c0 1.500-1 2.500-2.500 2.500h-3c-1 0-2-1-2-2 0 1-1 2-2 2H7c-1.500 0-2.500-1-2.500-2.500V15l2-3-2-3V7.500C4.500 6 5.500 5 7 5z" stroke="#fff" stroke-width="2" fill="none"/></svg>
            </div>
            <div class="task-item task-m1 is-open d-flex align-items-center justify-content-center">
                <svg width="24" height="24"><use href="#hs"/></svg>
            </div>
            <div class="ms-auto d-flex align-items-center">
                <div class="tray-ic d-flex justify-content-center">
                    <svg width="14" height="10" viewBox="0 0 14 10"><path d="M1.500 8L7 2.500 12.500 8" stroke="#fff" stroke-width="1.200" fill="none"/></svg>
                </div>
                <div class="tray-ic d-flex justify-content-center">
                    <svg width="18" height="16" viewBox="0 0 18 16"><path d="M4.500 2.500h13v9h-13zM11 11.500v3M7 14.500h8" stroke="#fff" fill="none"/><rect x=".5" y=".5" width="5" height="6" fill="#0b1a2c" stroke="#fff"/></svg>
                </div>
                <div class="tray-ic d-flex justify-content-center">
                    <svg width="18" height="16" viewBox="0 0 18 16"><path d="M1 5.500h2.500L7 2v11l-3.500-3.500H1z" stroke="#fff" fill="none"/><circle cx="12" cy="11" r="4" fill="#d9363e"/><path d="M10.500 9.500l3 3M13.500 9.500l-3 3" stroke="#fff"/></svg>
                </div>
                <div class="clock-box text-center">
                    <div>1:05 AM</div>
                    <div>11/12/2023</div>
                </div>
                <div class="note-box d-flex justify-content-center">
                    <svg width="18" height="18" viewBox="0 0 18 18" class="me-2"><path d="M1 1h16v12H7l-3 3v-3H1z" fill="#fff"/><path d="M3.500 4.500h11M3.500 7.500h11" stroke="#0b1a2c"/></svg>
                    <div class="note-num">1</div>
                </div>
            </div>
        </div>
    </div>

    <script src="https://cdn.jsdelivr.net/npm/bootstrap@5.3.0/dist/js/bootstrap.bundle.min.js"></script>
</body>

</html>
